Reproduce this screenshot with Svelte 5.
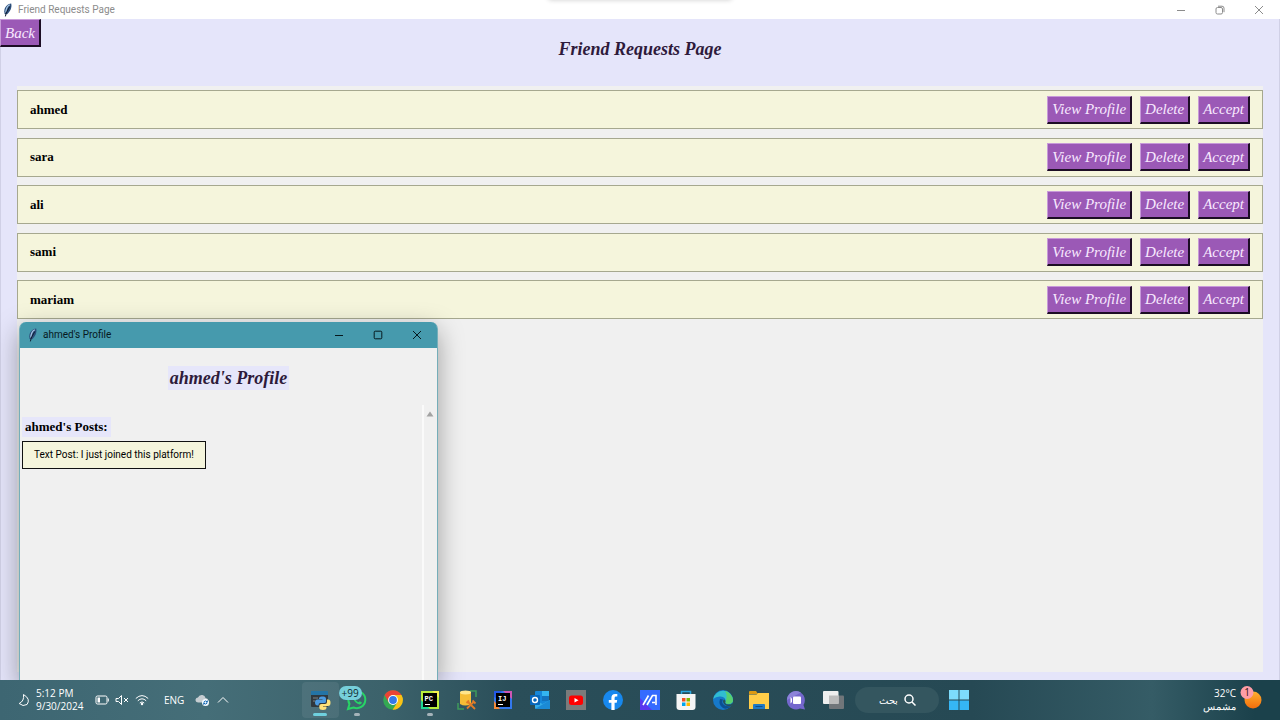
<script>
  const requests = ['ahmed', 'sara', 'ali', 'sami', 'mariam'];
  const apps = [
    'Python', 'WhatsApp', 'Chrome', 'PyCharm', 'Database tools', 'IntelliJ IDEA', 'Outlook', 'YouTube',
    'Facebook', 'MyASUS', 'Microsoft Store', 'Edge', 'File Explorer', 'Chat', 'Task View'
  ];
</script>

{#snippet feather()}
  <svg class="feather" viewBox="0 0 10 14" aria-hidden="true">
    <path d="M8.200 .6C4.500 1.200 1.400 4 1.300 8.200L1.600 11L4 11.200C7.200 9 9.200 4.500 8.200 .6Z" fill="#2c4f7c" />
    <path d="M6.800 1.800C4.500 3 3 6 2.800 9.500" stroke="#a9c8e6" stroke-width="1.200" fill="none" />
    <path d="M6.800 3.500L3.200 10L2.400 13.400" stroke="#101c30" stroke-width="1" fill="none" />
  </svg>
{/snippet}

{#snippet controls(restored)}
  <div class="controls">
    <button aria-label="Minimize"><svg viewBox="0 0 10 10"><path d="M1 5.500H9" /></svg></button>
    <button aria-label="Maximize">
      <svg viewBox="0 0 10 10">
        {#if restored}
          <rect x="1" y="2.500" width="6.500" height="6.500" rx="1.500" />
          <path d="M3 1.200H7Q9 1.200 9 3.200V7.200" />
        {:else}
          <rect x="1.200" y="1.200" width="7.600" height="7.600" rx="1" />
        {/if}
      </svg>
    </button>
    <button aria-label="Close"><svg viewBox="0 0 10 10"><path d="M1 1L9 9M9 1L1 9" /></svg></button>
  </div>
{/snippet}

{#snippet appIcon(name)}
  <svg class="app-icon" viewBox="0 0 20 20" aria-hidden="true">
    {#if name === 'Python'}
      <rect x="1" y="1" width="17" height="16" rx="1" fill="#30383d" />
      <path d="M1 1H18V5H1Z" fill="#2474a5" />
      <path d="M3 8H8M3 11H5" stroke="#7c8588" />
      <path d="M11.500 6.500H13.500Q16 6.500 16 9V11.500Q16 13 14 13H10Q8.500 13 8.500 15.500H7.500Q5 15.500 5 12.500Q5 9.500 7.500 9.500H12.500V9H9V8.500Q9 6.500 11.500 6.500Z" fill="#4c9be0" />
      <path d="M17 9.500H18Q20.500 9.500 20.500 12.800Q20.500 16 18 16H13V16.500H16.500V17.500Q16.500 20 13 20Q9.300 20 9.300 17.500V15.800Q9.300 13.900 11.500 13.900H15Q17 13.900 17 12Z" fill="#ffe27a" />
    {:else if name === 'WhatsApp'}
      <path d="M1 19L2.500 14A8.500 8.500 0 1 1 6.500 17.500Z" fill="none" stroke="#28d366" stroke-width="2" />
      <path d="M7.500 5.800Q5.500 7 6.500 9.500Q8.500 13.500 12.500 14.500Q14.500 14.500 15 12.500L12.800 11.200L11.500 12.300Q9.500 11.500 8.500 9.500L9.200 8.200Z" fill="#28d366" />
    {:else if name === 'Chrome'}
      <circle cx="10" cy="10" r="9.800" fill="#34a853" />
      <path d="M10 10L1.500 5.100A9.800 9.800 0 0 1 18.500 5.100Z" fill="#ea4335" />
      <path d="M10 5.100H18.500A9.800 9.800 0 0 1 9.600 19.800L14.300 12.400Z" fill="#fbc116" />
      <path d="M1.500 5.100L5.700 12.400L10 10V5.100Z" fill="#ea4335" />
      <circle cx="10" cy="10" r="4.900" fill="#fff" />
      <circle cx="10" cy="10" r="3.900" fill="#3478e8" />
    {:else if name === 'PyCharm'}
      <path d="M1 1H19V19H1Z" fill="#b9ef3c" />
      <path d="M1 10L10 19H1Z" fill="#20d695" />
      <path d="M12 1H19V8Z" fill="#f6f34d" />
      <rect x="3" y="3" width="14" height="14" fill="#000" />
      <text x="4.500" y="10.500" class="ide">PC</text>
      <path d="M5 14.500H10" stroke="#fff" />
    {:else if name === 'Database tools'}
      <path d="M13 1H19V7M1 13V19H7" fill="none" stroke="#3f9b5b" stroke-width="1.500" />
      <path d="M3 2V14Q8 17 14 14V2Z" fill="#f5bd36" />
      <ellipse cx="8.500" cy="2.500" rx="5.500" ry="1.900" fill="#ffe58b" />
      <path d="M10 18.500L17 11.500M10.500 11.500L18 19M9.500 13L12 10.500M15.500 10.500L18.500 13.500" stroke="#e17b27" stroke-width="1.800" />
    {:else if name === 'IntelliJ IDEA'}
      <path d="M1 1H19V19H1Z" fill="#3378ee" />
      <path d="M1 11L7 19H1Z" fill="#f58a38" />
      <path d="M10 1H19V9Z" fill="#cf56b5" />
      <path d="M1 1H9L3 8L1 7Z" fill="#2459e8" />
      <rect x="3" y="3" width="14" height="14" fill="#000" />
      <text x="5" y="10.500" class="ide">IJ</text>
      <path d="M5 14.500H10" stroke="#fff" />
    {:else if name === 'Outlook'}
      <rect x="5" y="1" width="14" height="14" rx="1" fill="#1687d9" />
      <path d="M12 1H19V6H12Z" fill="#34b5ef" />
      <path d="M12 6H19V11H12Z" fill="#1473bd" />
      <path d="M5 10L12.500 14L20 10V18Q20 19 19 19H6Q5 19 5 18Z" fill="#34abe8" />
      <path d="M5 19L20 10V18Q20 19 19 19Z" fill="#1b8ad5" />
      <rect y="5" width="10" height="10" rx="1" fill="#0867bb" />
      <circle cx="5" cy="10" r="2.500" fill="none" stroke="#fff" stroke-width="1.400" />
    {:else if name === 'YouTube'}
      <path d="M0 0H20V20H0Z" fill="#7b7b7b" />
      <rect x="3" y="5.500" width="14" height="9.500" rx="2.500" fill="#f00" />
      <path d="M8.500 8L12.500 10.200L8.500 12.400Z" fill="#fff" />
    {:else if name === 'Facebook'}
      <circle cx="10" cy="10" r="10" fill="#1788ee" />
      <path d="M8.400 20V12.800H5.800V9.900H8.400V7.700Q8.400 3.900 12.100 3.900L14.300 4.100V6.600H13Q11.600 6.600 11.600 8V9.900H14.200L13.700 12.800H11.600V20Z" fill="#fff" />
    {:else if name === 'MyASUS'}
      <path d="M0 0H20V20H0Z" fill="#346bff" />
      <path d="M0 8L12 20H0Z" fill="#5a35ef" />
      <path d="M3 15L8.500 5.500M7 15L12.500 5.500H16V15M12 12.500H15" fill="none" stroke="#fff" stroke-width="1.600" />
    {:else if name === 'Microsoft Store'}
      <path d="M5.500 5V1.500H14.500V5" fill="none" stroke="#2aa7df" stroke-width="1.500" />
      <path d="M.5 4H19.500V17Q19.500 20 16.500 20H3.500Q.5 20 .5 17Z" fill="#f5f5f5" />
      <path d="M6 8H9.500V11.500H6Z" fill="#f25022" /><path d="M10.500 8H14V11.500H10.500Z" fill="#7fba00" />
      <path d="M6 12.500H9.500V16H6Z" fill="#00a4ef" /><path d="M10.500 12.500H14V16H10.500Z" fill="#ffb900" />
    {:else if name === 'Edge'}
      <circle cx="10" cy="10" r="10" fill="#1679ca" />
      <path d="M.2 9A10 10 0 0 1 20 10Q20 14 15.500 14Q12 14 12.500 11.500Q13 7 7.500 6.500Q3 6.200.2 9Z" fill="#31bdd1" />
      <path d="M12 1A10 10 0 0 1 20 10Q20 14 15.500 14Q12 14 12.500 11.500Q15 6 12 1Z" fill="#57cf70" />
      <path d="M7 9Q5 15 10 18Q14 20 18 16Q14 17 11 15Q8 12.500 10 9.500Z" fill="#0b4f91" />
      <path d="M12.500 11.500Q11 14 15.500 14.500Q18 14.500 19.500 13L18.500 16Q14 17 11 14Q9 11 11 9.500Q12.500 9.500 12.500 11.500Z" fill="#24515b" />
    {:else if name === 'File Explorer'}
      <path d="M0 2Q0 1 1 1H7L9 4H0Z" fill="#dc9a12" />
      <path d="M0 4.500H7.500L9 3H20V19H0Z" fill="#ffcd48" />
      <path d="M4 19V15Q4 14 5 14H15Q16 14 16 15V19Z" fill="#1f79c4" />
      <path d="M6.500 16.500H13.500" stroke="#0b4d8c" />
    {:else if name === 'Chat'}
      <path d="M10 1A9.200 9.200 0 1 0 14 18.500L19 19.500L17.500 15A9.200 9.200 0 0 0 10 1Z" fill="#7467cd" />
      <path d="M10 1A9.200 9.200 0 0 0 1 10L15 2.500Q13 1 10 1Z" fill="#8c83d9" />
      <rect x="7" y="6.500" width="8" height="7.500" rx="1" fill="#fff" />
      <path d="M4.500 7L6 8.500V12L4.500 13.500Z" fill="#fff" />
    {:else}
      <rect x="6" y="5.500" width="15" height="13.500" rx="1" fill="#71767a" />
      <rect x="0" y="1" width="15.500" height="13" rx="1" fill="#eee" />
      <path d="M6 5.500H15.500V14H6Z" fill="#bcbcbc" />
    {/if}
  </svg>
{/snippet}

<div class="desktop">
  <header class="titlebar">
    {@render feather()}
    <span>Friend Requests Page</span>
    <i class="snap"></i>
    {@render controls(true)}
  </header>

  <main>
    <div class="heading">
      <button class="action back">Back</button>
      <h1>Friend Requests Page</h1>
    </div>
    <div class="panel">
      <ul>
        {#each requests as name}
          <li>
            <strong>{name}</strong>
            <button class="action">View Profile</button>
            <button class="action">Delete</button>
            <button class="action">Accept</button>
          </li>
        {/each}
      </ul>
    </div>

    <section class="window" aria-label="ahmed's Profile">
      <header class="titlebar">
        {@render feather()}
        <span>ahmed's Profile</span>
        {@render controls(false)}
      </header>
      <h2>ahmed's Profile</h2>
      <div class="scroll">
        <div class="posts">
          <h3>ahmed's Posts:</h3>
          <p>Text Post: I just joined this platform!</p>
        </div>
        <div class="track"><button aria-label="Scroll up"><svg viewBox="0 0 8 6"><path d="M4 .5L7.500 5.500H.5Z" fill="#a3a3a3" /></svg></button></div>
      </div>
    </section>
  </main>

  <footer>
    <div class="tray">
      <svg class="moon" viewBox="0 0 12 14"><path d="M5.500 1.500Q6.500 8 1.200 10.500Q5 14 9 11.500Q13 6 5.500 1.500Z" /></svg>
      <div class="clock"><span>5:12 PM</span><span>9/30/2024</span></div>
      <svg class="battery" viewBox="0 0 14 12"><rect x="1" y="2" width="11" height="8" rx="1.500" /><path d="M13.300 4.500V7.500" /><path d="M2.500 3.500H5V8.500H2.500Z" fill="#fff" stroke="none" /></svg>
      <svg class="sound" viewBox="0 0 14 12"><path d="M1 4.500H3.500L6.500 1.500V10.500L3.500 7.500H1ZM9 4L13 8M13 4L9 8" /></svg>
      <svg class="wifi" viewBox="0 0 14 12"><path d="M.8 4.500Q7-1.300 13.200 4.500M2.800 6.800Q7 2.800 11.200 6.800M4.800 9Q7 6.800 9.200 9" /><circle cx="7" cy="10" r="1.200" fill="#fff" stroke="none" /></svg>
      <span class="lang">ENG</span>
      <svg class="cloud" viewBox="0 0 14 12"><path d="M3.500 8.500Q.3 8.300.5 5.500Q1 3.500 3 3.500Q4 .5 7.500 1Q10 1.500 10.500 4Q13 4 13.200 6.500L11 8.500Z" fill="#c6cdd1" stroke="none" /><circle cx="10.500" cy="8.500" r="3.500" fill="#f5fbff" stroke="none" /><path d="M8.700 8.200Q10.500 5.800 12.200 8M12.300 6.500V8H11M12.300 9Q10.500 11 8.800 9.200M8.700 10.700V9.200H10" stroke="#1268b4" /></svg>
      <svg class="chevron" viewBox="0 0 12 12"><path d="M1 8.500L6 3.500L11 8.500" /></svg>
    </div>

    <nav aria-label="Taskbar">
      {#each apps as app, i}
        <button class="app" class:active={i === 0} class:running={i === 1 || i === 3} aria-label={app}>
          {@render appIcon(app)}
          {#if i === 1}<span class="badge">+99</span>{/if}
        </button>
      {/each}
    </nav>
    <button class="search" dir="rtl">
      <svg viewBox="0 0 12 12"><circle cx="5" cy="5" r="4" /><path d="M8 8L11.500 11.500" /></svg>
      <span>بحث</span>
    </button>
    <button class="start" aria-label="Start">
      <svg class="app-icon" viewBox="0 0 20 20"><path d="M0 0H9.500V9.500H0ZM10.500 0H20V9.500H10.500Z" fill="#7ddcfc" /><path d="M0 10.500H9.500V20H0ZM10.500 10.500H20V20H10.500Z" fill="#35b6f5" /></svg>
    </button>

    <div class="weather">
      <div><span>32°C</span><span lang="ar">مشمس</span></div>
      <svg viewBox="0 0 22 24"><defs><linearGradient id="sun" x2="0" y2="1"><stop stop-color="#ffb02e" /><stop offset="1" stop-color="#f36d0c" /></linearGradient></defs><circle cx="13" cy="15" r="8.500" fill="url(#sun)" /><circle cx="7" cy="7.500" r="6.500" fill="#ff9da7" /><text x="7" y="11" text-anchor="middle">1</text></svg>
    </div>
  </footer>
</div>

<style>
  :global(body) { margin: 0; }
  * { box-sizing: border-box; }
  button { margin: 0; padding: 0; border: 0; background: none; color: inherit; font: inherit; }
  svg { display: block; flex: none; }

  .desktop {
    display: flex;
    flex-direction: column;
    min-height: 100vh;
    overflow: hidden;
    background: #e5e5fa;
    font-family: "Open Sans", "Noto Sans", sans-serif;
    color: #000;
  }
  .titlebar {
    position: relative;
    display: flex;
    align-items: center;
    height: 19px;
    padding: 0 2px 0 3px;
    background: #fff;
    color: #8c8c8c;
    font: 10px/14px Roboto, sans-serif;
  }
  .snap { position: absolute; top: -6px; left: 50%; width: 184px; height: 6px; margin-left: -92px; border-radius: 3px; box-shadow: 0 0 5px rgb(0 0 0 / 20%); }
  .feather { width: 10px; height: 14px; margin-right: 5px; }
  .controls { display: flex; margin-left: auto; }
  .controls button { display: grid; place-items: center; width: 39px; height: 19px; }
  .controls svg { width: 10px; height: 10px; fill: none; stroke: currentColor; stroke-width: 1; }

  main {
    position: relative;
    flex: 1;
    display: flex;
    flex-direction: column;
    padding: 0 16px 8px;
    border: solid #d0d0e6;
    border-width: 0 1px;
  }
  .heading { height: 67px; padding-top: 18px; text-align: center; }
  h1, h2, h3, p, ul { margin: 0; padding: 0; }
  h1, h2 { font: italic bold 18px/24px "Liberation Serif", serif; color: #2e1a3b; }
  .action {
    height: 28px;
    padding: 0 4px;
    border: solid;
    border-width: 1px 2px 2px 1px;
    border-color: #c79ad9 #1c0d24 #1c0d24 #c79ad9;
    background: #9b59b6;
    color: #f8e9ff;
    font: italic 15px/20px "Liberation Serif", serif;
    white-space: nowrap;
  }
  .back { position: absolute; top: 0; left: -1px; }
  .panel { flex: 1; padding: 4px 0; background: #f0f0f0; }
  ul { display: flex; flex-direction: column; justify-content: space-between; height: 229px; list-style: none; }
  li {
    display: flex;
    align-items: center;
    gap: 8px;
    height: 39px;
    padding: 0 12px;
    border: 1px solid #a6a88f;
    background: #f5f5dc;
  }
  li strong { margin-right: auto; font: bold 13px/18px "Liberation Serif", serif; }

  .window {
    position: absolute;
    top: 303px;
    bottom: 0;
    left: 18px;
    display: flex;
    flex-direction: column;
    width: 419px;
    border: solid #75aeb9;
    border-width: 0 1px;
    border-radius: 7px 7px 0 0;
    background: #f0f0f0;
    box-shadow: 0 8px 26px rgb(0 0 0 / 35%);
    clip-path: inset(-40px -50px 0 -50px);
  }
  .window .titlebar { height: 26px; padding: 0 1px 0 8px; border-radius: 6px 6px 0 0; background: #469aad; color: #06191e; }
  .window h2 { align-self: center; margin-top: 18px; padding: 0 2px; background: #e6e6fa; }
  .scroll { flex: 1; display: flex; margin-top: 15px; }
  .posts { flex: 1; padding: 12px 0 0 2px; }
  h3 { width: fit-content; padding: 0 3px; background: #e6e6fa; font: bold 13px/20px "Liberation Serif", serif; }
  .posts p { width: fit-content; margin-top: 4px; padding: 5px 11px; border: 1px solid #111; background: #f5f5dc; font: 10px/16px Roboto, sans-serif; }
  .track { width: 15px; border-left: 2px solid #fafafa; }
  .track button { display: block; width: 13px; padding: 6px 0 0 2px; }
  .track svg { width: 8px; height: 6px; }

  footer {
    display: flex;
    align-items: center;
    height: 40px;
    background: linear-gradient(90deg, #3d6672 0, #456e78 16%, #3c626b 30%, #2a4e59 40%, #264954 76%, #355c66 90%, #1b414b 98%);
    color: #fff;
    font-size: 10px;
  }
  .tray { display: flex; align-items: center; width: 302px; padding-left: 18px; }
  .tray svg { width: 14px; height: 12px; fill: none; stroke: #fff; stroke-width: 1; }
  .tray .moon { width: 12px; height: 14px; }
  .clock { width: 52px; margin: 0 7px 0 6px; }
  .clock span, .weather span { display: block; line-height: 13px; white-space: nowrap; }
  .tray .sound { margin: 0 6px; }
  .lang { margin: 0 11px 0 15px; }
  .tray .chevron { width: 12px; height: 12px; margin-left: 8px; }

  nav { display: grid; grid-template-columns: repeat(15, 1fr); width: 549px; }
  .app { position: relative; display: grid; place-items: center; height: 36px; border-radius: 4px; }
  .app-icon { width: 20px; height: 20px; overflow: visible; }
  .active { background: rgb(255 255 255 / 7%); }
  .running::after, .active::after { position: absolute; bottom: 2px; width: 6px; height: 3px; border-radius: 2px; background: #a5b4ba; content: ""; }
  .active::after { width: 14px; background: #6fd1df; }
  .badge { position: absolute; top: 4px; left: 0; width: 23px; height: 14px; border-radius: 7px; background: #76cfdb; color: #102a30; line-height: 14px; text-align: center; }
  .ide { fill: #fff; font: bold 7px "Liberation Mono", monospace; }
  .search { display: flex; align-items: center; justify-content: center; gap: 6px; width: 84px; height: 26px; margin-left: 4px; border-radius: 13px; background: #34565f; }
  .search svg { width: 12px; height: 12px; fill: none; stroke: #fff; stroke-width: 1.5; }
  .start { margin-left: 10px; }
  .weather { display: flex; align-items: center; gap: 4px; margin-left: auto; padding-right: 18px; text-align: right; }
  .weather svg { width: 22px; height: 24px; margin-bottom: 6px; }
  .weather text { fill: #301010; font-size: 10px; }
</style>
